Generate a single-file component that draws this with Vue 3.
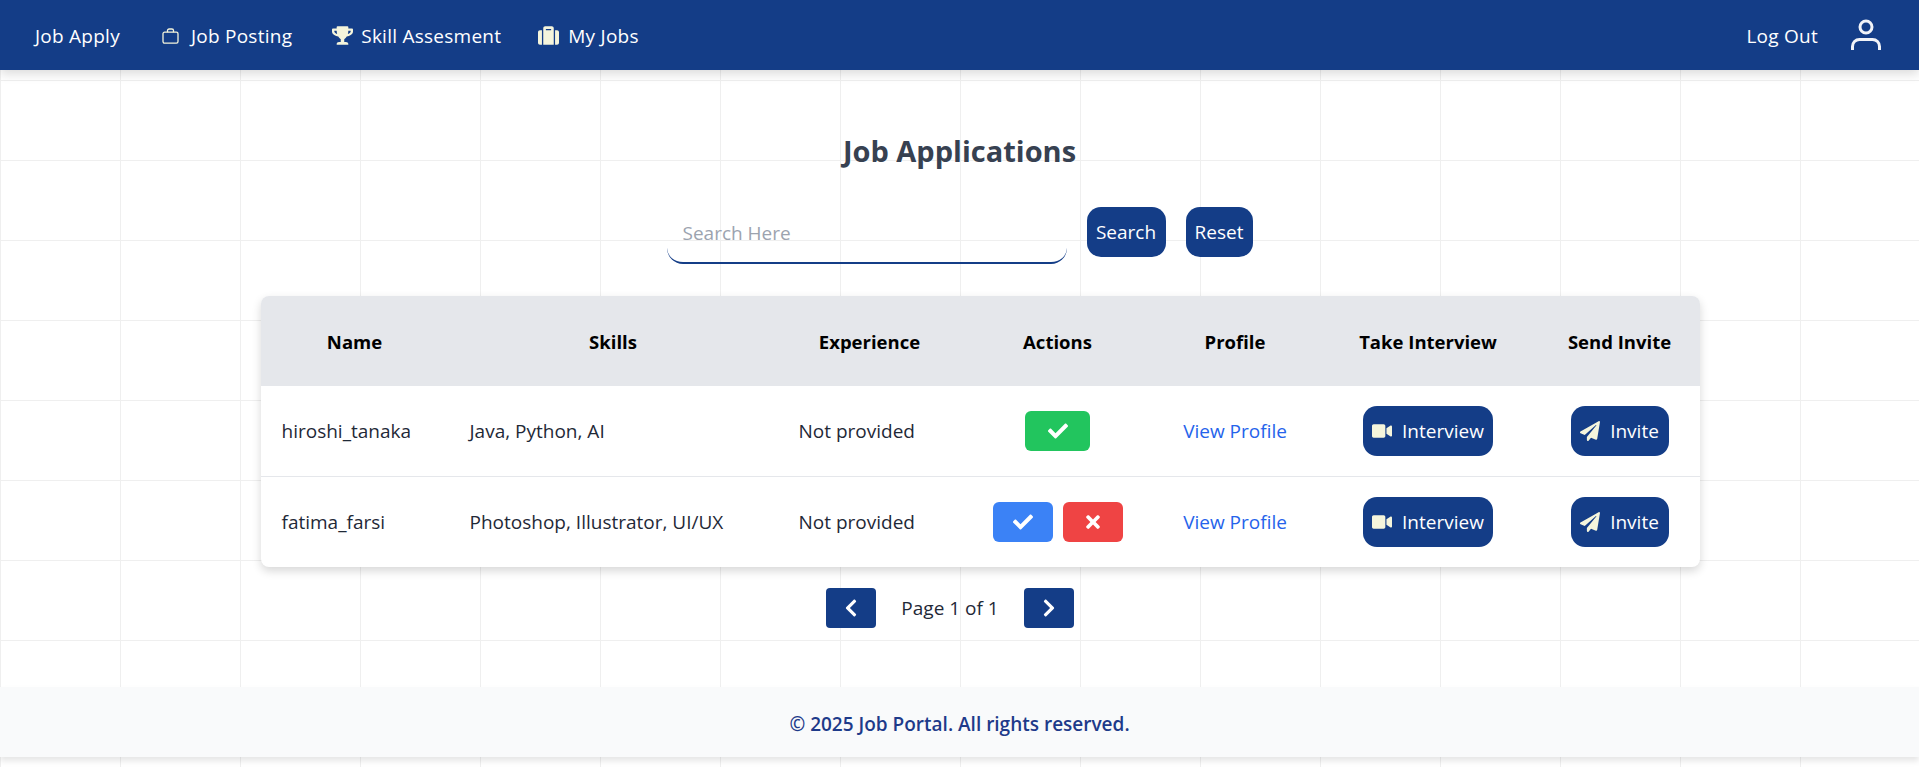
<script setup>
import { ref } from 'vue'

const search = ref('')

const columns = [
	{ label: 'Name', width: 188 },
	{ label: 'Skills', width: 329 },
	{ label: 'Experience', width: 184 },
	{ label: 'Actions', width: 192 },
	{ label: 'Profile', width: 163 },
	{ label: 'Take Interview', width: 223 },
	{ label: 'Send Invite', width: 160 }
]

const applicants = [
	{ name: 'hiroshi_tanaka', skills: 'Java, Python, AI', experience: 'Not provided', accepted: true },
	{ name: 'fatima_farsi', skills: 'Photoshop, Illustrator, UI/UX', experience: 'Not provided', accepted: false }
]

const CHECK = 'M173.898 439.404l-166.4-166.4c-9.997-9.997-9.997-26.206 0-36.204l36.203-36.204c9.997-9.998 26.207-9.998 36.204 0L192 312.69 432.095 72.596c9.997-9.997 26.207-9.997 36.204 0l36.203 36.204c9.997 9.997 9.997 26.206 0 36.204l-294.4 294.401c-9.998 9.997-26.207 9.997-36.204-.001z'
const TIMES = 'M242.72 256l100.07-100.07c12.28-12.28 12.28-32.19 0-44.48l-22.24-22.24c-12.28-12.28-32.19-12.28-44.48 0L176 189.28 75.93 89.21c-12.28-12.28-32.19-12.28-44.48 0L9.21 111.45c-12.28 12.28-12.28 32.19 0 44.48L109.28 256 9.21 356.07c-12.28 12.28-12.28 32.19 0 44.48l22.24 22.24c12.28 12.28 32.2 12.28 44.48 0L176 322.72l100.07 100.07c12.28 12.28 32.2 12.28 44.48 0l22.24-22.24c12.28-12.28 12.28-32.19 0-44.48L242.72 256z'
const VIDEO = 'M336.2 64H47.8C21.4 64 0 85.4 0 111.8v288.4C0 426.6 21.4 448 47.8 448h288.4c26.4 0 47.8-21.4 47.8-47.8V111.8c0-26.4-21.4-47.8-47.8-47.8zm189.4 37.7L416 177.3v157.4l109.6 75.5c21.2 14.6 50.4-.3 50.4-25.8V127.5c0-25.4-29.1-40.4-50.4-25.8z'
const PLANE = 'M476 3.2L12.5 270.6c-18.1 10.4-15.8 35.6 2.2 43.2L121 358.4l287.3-253.2c5.5-4.9 13.3 2.6 8.6 8.3L176 407v80.5c0 23.6 28.5 32.9 42.5 15.8L282 426l124.6 52.2c14.2 6 30.4-2.9 33-18.2l72-432C515 7.8 493.3-6.8 476 3.2z'
const TROPHY = 'M552 64H448V24c0-13.3-10.7-24-24-24H152c-13.3 0-24 10.7-24 24v40H24C10.7 64 0 74.7 0 88v56c0 35.7 22.5 72.4 61.9 100.7 31.5 22.7 69.8 37.1 110 41.7C203.3 338.5 240 360 240 360v72h-48c-35.3 0-64 20.7-64 56v12c0 6.6 5.4 12 12 12h296c6.6 0 12-5.4 12-12v-12c0-35.3-28.7-56-64-56h-48v-72s36.7-21.5 68.1-73.6c40.3-4.6 78.6-19 110-41.7 39.3-28.3 61.9-65 61.9-100.7V88c0-13.3-10.7-24-24-24zM99.3 192.8C74.9 175.2 64 155.6 64 144v-16h64.2c1 32.6 5.8 61.2 12.8 86.2-15.1-5.2-29.2-12.4-41.7-21.4zM512 144c0 16.1-17.7 36.1-35.3 48.8-12.5 9-26.7 16.2-41.8 21.4 7-25 11.8-53.6 12.8-86.2H512v16z'
const SUITCASE = 'M128 480h256V80c0-26.5-21.5-48-48-48H176c-26.5 0-48 21.5-48 48v400zm64-384h128v32H192V96zm320 80v256c0 26.5-21.5 48-48 48h-48V128h48c26.5 0 48 21.5 48 48zM96 480H48c-26.5 0-48-21.5-48-48V176c0-26.5 21.5-48 48-48h48v352z'
const LEFT = 'M34.52 239.03L228.87 44.69c9.37-9.37 24.57-9.37 33.94 0l22.67 22.67c9.36 9.36 9.37 24.52.04 33.9L131.49 256l154.02 154.75c9.34 9.38 9.32 24.54-.04 33.9l-22.67 22.67c-9.37 9.37-24.57 9.37-33.94 0L34.52 272.97c-9.37-9.37-9.37-24.57 0-33.94z'
const RIGHT = 'M285.476 272.971L91.132 467.314c-9.373 9.373-24.569 9.373-33.941 0l-22.667-22.667c-9.357-9.357-9.375-24.522-.04-33.901L188.505 256 34.484 101.255c-9.335-9.379-9.317-24.544.04-33.901l22.667-22.667c9.373-9.373 24.569-9.373 33.941 0L285.475 239.03c9.373 9.372 9.373 24.568.001 33.941z'
</script>

<template>
	<div class="page">
		<nav class="navbar">
			<a href="#" class="nav-link" @click.prevent>Job Apply</a>
			<a href="#" class="nav-link" @click.prevent>
				<svg class="ico-bag" viewBox="0 0 17 16" fill="none" stroke="currentColor" stroke-width="1.3">
					<rect x="1" y="4.2" width="15" height="11" rx="1.6" />
					<path d="M5.5 4.2V2.6c0-.9.7-1.6 1.6-1.6h2.8c.9 0 1.6.7 1.6 1.6v1.6" />
				</svg>
				Job Posting
			</a>
			<a href="#" class="nav-link" @click.prevent>
				<svg class="ico-trophy" viewBox="0 0 576 512" fill="currentColor"><path :d="TROPHY" /></svg>
				Skill Assesment
			</a>
			<a href="#" class="nav-link" @click.prevent>
				<svg class="ico-suitcase" viewBox="0 0 512 512" fill="currentColor"><path :d="SUITCASE" /></svg>
				My Jobs
			</a>
			<a href="#" class="logout" @click.prevent>Log Out</a>
			<svg class="ico-user" viewBox="0 0 30 32" fill="none" stroke="currentColor" stroke-width="3">
				<circle cx="15" cy="8" r="6" />
				<path d="M1.5 31v-3.5c0-4 3-7 7-7h13c4 0 7 3 7 7V31" />
			</svg>
		</nav>

		<main class="content">
			<h1>Job Applications</h1>

			<form class="search-form" @submit.prevent>
				<input v-model="search" class="search-input" placeholder="Search Here" />
				<button class="btn search-btn">Search</button>
				<button class="btn reset-btn">Reset</button>
			</form>

			<div class="table-card">
				<table>
					<colgroup>
						<col v-for="c in columns" :key="c.label" :style="{ width: c.width + 'px' }" />
					</colgroup>
					<thead>
						<tr>
							<th v-for="c in columns" :key="c.label">{{ c.label }}</th>
						</tr>
					</thead>
					<tbody>
						<tr v-for="a in applicants" :key="a.name">
							<td>{{ a.name }}</td>
							<td>{{ a.skills }}</td>
							<td>{{ a.experience }}</td>
							<td class="center">
								<div class="actions">
									<button v-if="a.accepted" class="act green">
										<svg class="ico-act" viewBox="0 0 512 512" fill="currentColor"><path :d="CHECK" /></svg>
									</button>
									<template v-else>
										<button class="act blue">
											<svg class="ico-act" viewBox="0 0 512 512" fill="currentColor"><path :d="CHECK" /></svg>
										</button>
										<button class="act red">
											<svg class="ico-x" viewBox="0 0 352 512" fill="currentColor"><path :d="TIMES" /></svg>
										</button>
									</template>
								</div>
							</td>
							<td class="center"><a href="#" class="profile" @click.prevent>View Profile</a></td>
							<td class="center">
								<button class="btn icon-btn interview">
									<svg class="ico-video" viewBox="0 0 576 512" fill="currentColor"><path :d="VIDEO" /></svg>
									Interview
								</button>
							</td>
							<td class="center">
								<button class="btn icon-btn invite">
									<svg class="ico-plane" viewBox="0 0 512 512" fill="currentColor"><path :d="PLANE" /></svg>
									Invite
								</button>
							</td>
						</tr>
					</tbody>
				</table>
			</div>

			<div class="pagination">
				<button class="page-btn">
					<svg class="ico-chev" viewBox="0 0 320 512" fill="currentColor"><path :d="LEFT" /></svg>
				</button>
				<span>Page 1 of 1</span>
				<button class="page-btn">
					<svg class="ico-chev" viewBox="0 0 320 512" fill="currentColor"><path :d="RIGHT" /></svg>
				</button>
			</div>
		</main>

		<footer class="footer">© 2025 Job Portal. All rights reserved.</footer>
	</div>
</template>

<style scoped>
.page {
	width: 100%;
	height: 767px;
	overflow: hidden;
	display: flex;
	flex-direction: column;
	font-family: "Open Sans", "Noto Sans", sans-serif;
	font-size: 19px;
	color: #1f2937;
	background-color: #fff;
	background-image:
		linear-gradient(to right, #efefef 1px, transparent 1px),
		linear-gradient(to bottom, #efefef 1px, transparent 1px);
	background-size: 120px 80px;
}

.navbar {
	flex: 0 0 70px;
	display: flex;
	align-items: center;
	padding: 0 38px 0 35px;
	background: #143d87;
	color: #fff;
	box-shadow: 0 4px 10px rgba(0, 0, 0, .14);
	position: relative;
}

.nav-link {
	display: flex;
	align-items: center;
	margin-right: 40px;
	padding-top: 1px;
	color: #fff;
	text-decoration: none;
	letter-spacing: .25px;
}

.nav-link:first-child { margin-right: 42px; }
.nav-link:nth-child(3) { margin-right: 37px; }

.nav-link svg {
	color: #f5f5dc;
}

.ico-bag { width: 17px; height: 16px; margin-right: 12px; }
.ico-trophy { width: 21px; height: 19px; margin-right: 8px; }
.ico-suitcase { width: 21px; height: 21px; margin-right: 9px; }

.logout {
	margin-left: auto;
	margin-right: 33px;
	padding-top: 1px;
	color: #fff;
	text-decoration: none;
	letter-spacing: .25px;
}

.ico-user {
	width: 30px;
	height: 32px;
	color: #f1f3f8;
}

.content {
	flex: 1;
	display: flex;
	flex-direction: column;
	align-items: center;
}

h1 {
	margin: 61px 0 0;
	font-size: 29px;
	line-height: 40px;
	font-weight: 700;
	color: #374151;
}

.search-form {
	margin-top: 36px;
	display: flex;
	align-items: flex-start;
	gap: 20px;
}

.search-input {
	box-sizing: border-box;
	width: 400px;
	height: 50px;
	margin-top: 7px;
	padding: 0 16px 10px;
	border: 0;
	border-bottom: 2px solid #143d87;
	border-radius: 16px;
	outline: none;
	background: transparent;
	font: inherit;
	color: #1f2937;
}

.search-input::placeholder {
	color: #9ca3af;
	opacity: 1;
}

.btn {
	height: 50px;
	padding: 0;
	border: 0;
	border-radius: 14px;
	background: #143d87;
	color: #fff;
	font: inherit;
}

.search-btn { width: 79px; }
.reset-btn { width: 67px; }

.table-card {
	box-sizing: border-box;
	width: 1439px;
	margin: 32px 0 0 41px;
	border-radius: 8px;
	overflow: hidden;
	background: #fff;
	box-shadow: 0 4px 10px rgba(0, 0, 0, .16);
}

table {
	width: 1439px;
	table-layout: fixed;
	border-collapse: collapse;
}

th {
	height: 90px;
	padding: 1px 0 0;
	box-sizing: border-box;
	background: #e5e7eb;
	color: #000;
	font-size: 18.5px;
	font-weight: 700;
}

td {
	height: 90px;
	padding: 0 21px;
	white-space: nowrap;
}

tbody tr + tr td {
	border-top: 1px solid #e5e7eb;
}

td.center {
	padding: 0;
	text-align: center;
}

.actions {
	display: flex;
	justify-content: center;
	gap: 10px;
}

.act {
	width: 60px;
	height: 40px;
	border: 0;
	border-radius: 6px;
	color: #fff;
	display: grid;
	place-items: center;
	padding: 0;
}

.green { width: 65px; background: #22c55e; }
.blue { background: #3b82f6; }
.red { background: #ef4444; }

.ico-act { width: 20px; height: 20px; }
.ico-x { width: 14px; height: 20px; }

.profile {
	color: #2563eb;
	text-decoration: none;
}

.icon-btn {
	display: inline-flex;
	align-items: center;
	justify-content: center;
	vertical-align: middle;
}

.interview { width: 130px; }
.invite { width: 98px; }

.ico-video { width: 20px; height: 18px; margin-right: 10px; color: #f5f5dc; }
.ico-plane { width: 20px; height: 20px; margin-right: 10px; color: #f5f5dc; }

.pagination {
	margin: 21px 19px 0 0;
	display: flex;
	align-items: center;
	gap: 25px;
}

.page-btn {
	width: 50px;
	height: 40px;
	padding: 0;
	border: 0;
	border-radius: 4px;
	background: #143d87;
	color: #fff;
	display: grid;
	place-items: center;
}

.ico-chev { width: 14px; height: 20px; }

.footer {
	flex: 0 0 70px;
	margin-bottom: 10px;
	padding-top: 4px;
	box-sizing: border-box;
	display: flex;
	align-items: center;
	justify-content: center;
	background: #f9fafb;
	color: #1e3a8a;
	font-weight: 600;
	box-shadow: 0 4px 6px rgba(0, 0, 0, .1);
}
</style>
